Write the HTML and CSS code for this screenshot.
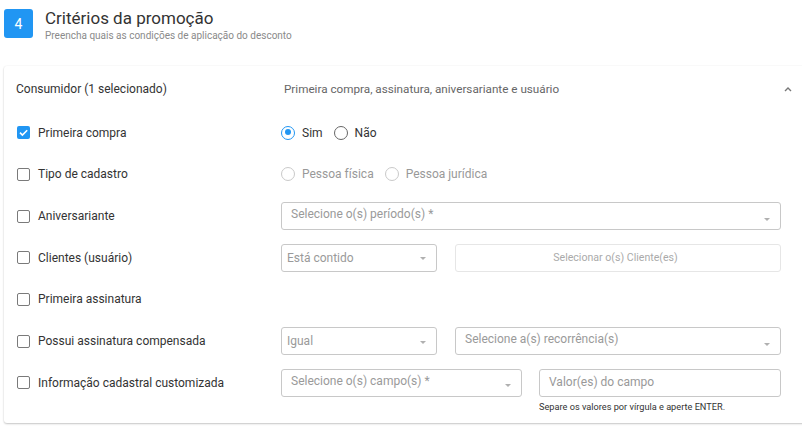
FILE: index.html
```html
<!DOCTYPE html>
<html lang="pt-BR">
<head>
<meta charset="utf-8">
<title>Critérios da promoção</title>
<link rel="stylesheet" href="styles.css">
</head>
<body>
<div class="page">
  <div class="step-head">
    <div class="badge">4</div>
    <div class="step-titles">
      <div class="step-title">Critérios da promoção</div>
      <div class="step-sub">Preencha quais as condições de aplicação do desconto</div>
    </div>
  </div>

  <div class="card">
    <div class="card-head">
      <div class="head-left">Consumidor (1 selecionado)</div>
      <div class="head-right">Primeira compra, assinatura, aniversariante e usuário</div>
      <svg class="chevron" width="8" height="6" viewBox="0 0 8 6"><path d="M1 5 L4 2 L7 5" fill="none" stroke="#777" stroke-width="1.4"/></svg>
    </div>

    <div class="row">
      <div class="label"><span class="cb checked"><svg width="13" height="13" viewBox="0 0 13 13"><path d="M3 6.6 L5.4 9 L10.2 4.2" fill="none" stroke="#fff" stroke-width="1.6"/></svg></span>Primeira compra</div>
      <div class="ctrl">
        <span class="radio on"></span><span class="rlabel">Sim</span>
        <span class="radio"></span><span class="rlabel">Não</span>
      </div>
    </div>

    <div class="row">
      <div class="label"><span class="cb"></span>Tipo de cadastro</div>
      <div class="ctrl disabled">
        <span class="radio"></span><span class="rlabel">Pessoa física</span>
        <span class="radio"></span><span class="rlabel">Pessoa jurídica</span>
      </div>
    </div>

    <div class="row">
      <div class="label"><span class="cb"></span>Aniversariante</div>
      <div class="ctrl">
        <div class="select multi full"><span>Selecione o(s) período(s) *</span><i class="arrow"></i></div>
      </div>
    </div>

    <div class="row">
      <div class="label"><span class="cb"></span>Clientes (usuário)</div>
      <div class="ctrl">
        <div class="select small"><span>Está contido</span><i class="arrow"></i></div>
        <div class="button">Selecionar o(s) Cliente(es)</div>
      </div>
    </div>

    <div class="row">
      <div class="label"><span class="cb"></span>Primeira assinatura</div>
      <div class="ctrl"></div>
    </div>

    <div class="row">
      <div class="label"><span class="cb"></span>Possui assinatura compensada</div>
      <div class="ctrl">
        <div class="select small"><span>Igual</span><i class="arrow"></i></div>
        <div class="select multi grow"><span>Selecione a(s) recorrência(s)</span><i class="arrow"></i></div>
      </div>
    </div>

    <div class="row">
      <div class="label"><span class="cb"></span>Informação cadastral customizada</div>
      <div class="ctrl">
        <div class="select multi mid"><span>Selecione o(s) campo(s) *</span><i class="arrow"></i></div>
        <div class="field">
          <div class="input"><span>Valor(es) do campo</span></div>
          <div class="hint">Separe os valores por vírgula e aperte ENTER.</div>
        </div>
      </div>
    </div>
  </div>
</div>
</body>
</html>
```

FILE: styles.css
```css
* { box-sizing: border-box; }
html, body { margin: 0; padding: 0; background: #fff; overflow: hidden; }
body {
  font-family: Roboto, "Liberation Sans", Arial, sans-serif;
  color: #333;
  font-size: 12px;
}
.page { width: 802px; height: 426px; overflow: hidden; }

.step-head { display: flex; padding: 9px 0 0 4px; height: 66px; }
.badge {
  width: 29px; height: 29px; border-radius: 3px;
  background: #2196f3; color: #fff;
  display: flex; align-items: center; justify-content: center;
  font-size: 14px;
}
.step-titles { margin-left: 12px; }
.step-title { font-size: 17px; line-height: 18px; margin-top: 0; color: #333; }
.step-sub { font-size: 10px; line-height: 12px; margin-top: 3px; color: #8a8a8a; }

.card {
  margin-left: 4px; margin-right: -12px;
  background: #fff;
  box-shadow: 0 1px 2px rgba(0,0,0,0.22), 0 0 2px rgba(0,0,0,0.05);
  border-radius: 3px;
  padding: 0 33px 20px 13px;
  height: 357px;
}
.card-head {
  height: 46px; display: flex; align-items: center;
}
.head-left { width: 266px; margin-left: -1px; color: #333; }
.head-right { flex: 1; color: #666; padding-left: 2px; font-size: 11.7px; }
.chevron { margin-right: -11px; }

.row { height: 41.67px; display: flex; align-items: center; }
.label { width: 264px; display: flex; align-items: center; color: #333; }
.cb {
  width: 13px; height: 13px; border: 1.6px solid #7a7a7a; border-radius: 2px;
  margin-right: 8px; flex: none; display: inline-block;
}
.cb.checked { background: #2196f3; border: none; }
.cb svg { display: block; }

.ctrl { flex: 1; display: flex; align-items: center; width: 500px; }
.radio {
  width: 14px; height: 14px; border-radius: 50%;
  border: 1.5px solid #666; flex: none; display: inline-block;
  position: relative; margin-right: 7px;
}
.radio.on { border-color: #2196f3; }
.radio.on::after {
  content: ""; position: absolute; left: 2.5px; top: 2.5px;
  width: 6px; height: 6px; border-radius: 50%; background: #2196f3;
}
.rlabel { margin-right: 11px; color: #333; }
.disabled .radio { border-color: #c9c9c9; }
.disabled .rlabel { color: #999; }

.select, .input, .button {
  height: 28px; border: 1px solid #c8c8c8; border-radius: 3px;
  display: flex; align-items: center; justify-content: space-between;
  padding: 0 10px 0 5px; color: #9a9a9a; background: #fff;
}
.select.multi { align-items: flex-start; padding-top: 4px; padding-left: 9px; }
.select.multi .arrow { align-self: center; }
.arrow {
  width: 0; height: 0; flex: none;
  border-left: 3.5px solid transparent; border-right: 3.5px solid transparent;
  border-top: 3.5px solid #b0b0b0; margin-top: 2px;
}
.full { width: 500px; }
.small { width: 156px; margin-right: 18px; }
.grow { flex: 1; }
.mid { width: 241px; margin-right: 17px; }
.button {
  flex: 1; justify-content: center; border-color: #e6e6e6;
  color: #aaa; font-size: 10.6px;
}
.field { flex: 1; position: relative; }
.input { padding-left: 9px; padding-bottom: 1px; color: #999; }
.hint {
  position: absolute; left: 0; top: 32px;
  font-size: 9.2px; color: #333; white-space: nowrap;
}
```
